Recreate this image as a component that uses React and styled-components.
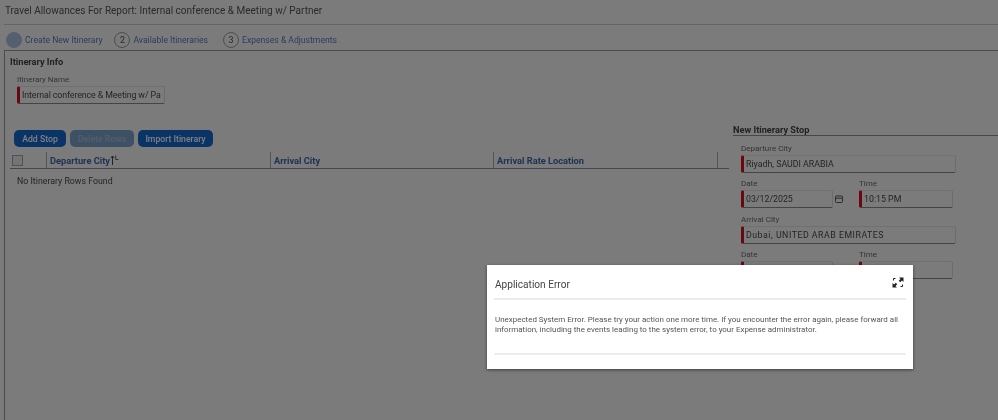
import React from 'react';
import styled, { createGlobalStyle } from 'styled-components';

const GlobalStyle = createGlobalStyle`
    html, body {
        margin: 0;
        padding: 0;
        background: #f6f6f6;
    }
    body {
        width: 998px;
        height: 420px;
        overflow: hidden;
        font-family: Roboto, "Liberation Sans", Arial, sans-serif;
        color: #333;
    }
`;

const Page = styled('div')`
    width: 998px;
    height: 420px;
    overflow: hidden;
    background: #f6f6f6;
    filter: blur(0.3px);
`;

const PageTitle = styled('div')`
    height: 25px;
    margin-left: 4px;
    padding: 3px 0 0 1px;
    box-sizing: border-box;
    line-height: 15px;
    font-size: 10px;
    color: #555;
    border-bottom: 1px solid #c8c8c8;
`;

const Steps = styled('div')`
    display: flex;
    align-items: center;
    height: 25px;
    padding: 4px 0 0 6px;
    box-sizing: border-box;
    font-size: 8.6px;
    color: #5a78b8;
`;

const Step = styled('div')`
    display: flex;
    align-items: center;
    gap: 3px;
    margin-right: ${props => props.gap}px;
`;

const StepCircle = styled('span')`
    display: flex;
    justify-content: center;
    align-items: center;
    width: 14px;
    height: 14px;
    border-radius: 50%;
    font-size: 9px;
    color: #555;
    border: 1px solid ${props => props.$active ? '#a8c0dc' : '#9a9a9a'};
    background: ${props => props.$active ? '#a8c0dc' : 'transparent'};
`;

const Panel = styled('div')`
    margin-left: 4px;
    height: 370px;
    border-top: 1px solid #969696;
    border-left: 1px solid #969696;
    box-sizing: border-box;
`;

const SectionTitle = styled('div')`
    font-size: 9.2px;
    font-weight: 700;
    line-height: 12px;
    color: #444;
    padding: 5px 0 0 5px;
`;

const FieldLabel = styled('div')`
    font-size: 8px;
    line-height: 10px;
    margin-bottom: 1px;
    color: #6a6a6a;
`;

const InputBox = styled('div')`
    display: flex;
    align-items: center;
    width: ${props => props.width}px;
    height: 18px;
    box-sizing: border-box;
    padding-left: 2px;
    font-size: 8.8px;
    letter-spacing: ${props => props.$spread || 0}px;
    white-space: nowrap;
    overflow: hidden;
    color: #4a4a4a;
    background: #f6f6f6;
    border-left: 3px solid #d01020;
    border-bottom: 1px solid #888;
    border-right: 1px solid #d8d8d8;
    border-top: 1px solid #e0e0e0;
    border-radius: 2px;
`;

const NameField = styled('div')`
    padding: 7px 0 0 12px;
`;

const Columns = styled('div')`
    display: flex;
    margin-top: 20px;
`;

const LeftColumn = styled('div')`
    width: 723px;
    padding-left: 9px;
    padding-top: 6px;
    box-sizing: border-box;
`;

const Toolbar = styled('div')`
    display: flex;
    gap: 4px;
`;

const Button = styled('div')`
    display: flex;
    justify-content: center;
    align-items: center;
    width: ${props => props.width}px;
    height: 17px;
    border-radius: 5px;
    font-size: 8.7px;
    font-weight: 500;
    color: ${props => props.$disabled ? '#a9bdd6' : '#fff'};
    background: ${props => props.$disabled ? '#7da0c8' : '#1468cc'};
`;

const TableHead = styled('div')`
    display: flex;
    align-items: stretch;
    width: 719px;
    height: 17px;
    margin: 5px 0 0 -4px;
    box-sizing: border-box;
    border-bottom: 1px solid #8e88a8;
`;

const HeadCell = styled('div')`
    display: flex;
    align-items: center;
    width: ${props => props.width}px;
    padding-left: 3px;
    box-sizing: border-box;
    font-size: 9.25px;
    font-weight: 700;
    color: #3f66a8;
    border-left: 1px solid #a8a8a8;
`;

const CheckCell = styled('div')`
    display: flex;
    align-items: center;
    width: 36px;
    padding-left: 2px;
    box-sizing: border-box;
`;

const CheckBox = styled('span')`
    width: 9px;
    height: 9px;
    border: 1px solid #a2a2a2;
    background: #e8e8e8;
`;

const SortIcon = () => (
    <svg width="9" height="10" viewBox="0 0 9 10" fill="none" stroke="#444" strokeWidth="1">
        <path d="M2.5 10V1M0.7 3L2.5 1L4.3 3" />
        <path d="M5.7 0.5V4.5H8.5" strokeWidth="0.8" />
    </svg>
);

const EmptyRow = styled('div')`
    padding: 6px 0 0 3px;
    font-size: 8.8px;
    line-height: 12px;
    color: #4a4a4a;
`;

const RightColumn = styled('div')`
    flex: 1;
    padding-left: 5px;
`;

const StopTitle = styled('div')`
    font-size: 9.2px;
    font-weight: 700;
    line-height: 10px;
    padding-top: 1px;
    color: #444;
    border-bottom: 1px solid #8e88a8;
`;

const StopForm = styled('div')`
    padding: 8px 0 0 8px;
`;

const StopRow = styled('div')`
    display: flex;
    margin-bottom: ${props => props.gap}px;
`;

const StopField = styled('div')`
    width: ${props => props.width}px;
`;

const DateRow = styled('div')`
    display: flex;
    align-items: center;
    gap: 2px;
`;

const CalendarIcon = () => (
    <svg width="8" height="8" viewBox="0 0 8 8" fill="none" stroke="#555" strokeWidth="1">
        <rect x="0.5" y="1" width="7" height="6.5" rx="1" />
        <path d="M0.5 3.2H7.5" />
    </svg>
);

const Overlay = styled('div')`
    position: fixed;
    inset: 0;
    background: rgba(0, 0, 0, 0.5);
`;

const Dialog = styled('div')`
    position: fixed;
    left: 487px;
    top: 265px;
    width: 426px;
    height: 104px;
    padding: 0 7px;
    box-sizing: border-box;
    background: #fff;
    box-shadow: 0 1px 3px rgba(0, 0, 0, 0.5);
`;

const DialogHeader = styled('div')`
    display: flex;
    justify-content: space-between;
    align-items: center;
    height: 35px;
    padding: 5px 2px 0 1px;
    box-sizing: border-box;
    border-bottom: 2px solid #ececec;
    font-size: 10.1px;
    color: #444;
`;

const DialogBody = styled('div')`
    height: 55px;
    padding: 15px 0 0 1px;
    box-sizing: border-box;
    font-size: 7.96px;
    line-height: 9.7px;
    color: #555;
    border-bottom: 2px solid #ececec;
`;

const ExpandIcon = () => (
    <svg width="12" height="11" viewBox="0 0 12 11" fill="none" stroke="#222" strokeWidth="1" style={{ marginTop: -4 }}>
        <path d="M1.5 3.5V1.5H3.5" />
        <path d="M7 0.5H11.5V5L10 3.5L8.2 5.2L6.8 3.8L8.5 2Z" fill="#222" strokeWidth="0" />
        <path d="M0.5 6V10.5H5L3.5 9L5.2 7.2L3.8 5.8L2 7.5Z" fill="#222" strokeWidth="0" />
        <path d="M10.5 7.5V9.5H8.5" />
    </svg>
);

const App = () => (
    <Page>
        <GlobalStyle />
        <PageTitle>Travel Allowances For Report: Internal conference &amp; Meeting w/ Partner</PageTitle>
        <Steps>
            <Step gap={12}><StepCircle $active /> Create New Itinerary</Step>
            <Step gap={15}><StepCircle>2</StepCircle> Available Itineraries</Step>
            <Step><StepCircle>3</StepCircle> Expenses &amp; Adjustments</Step>
        </Steps>
        <Panel>
            <SectionTitle>Itinerary Info</SectionTitle>
            <NameField>
                <FieldLabel>Itinerary Name</FieldLabel>
                <InputBox width={148} $spread={-0.1}>Internal conference &amp; Meeting w/ Pa</InputBox>
            </NameField>
            <Columns>
                <LeftColumn>
                    <Toolbar>
                        <Button width={52}>Add Stop</Button>
                        <Button width={64} $disabled>Delete Rows</Button>
                        <Button width={75}>Import Itinerary</Button>
                    </Toolbar>
                    <TableHead>
                        <CheckCell><CheckBox /></CheckCell>
                        <HeadCell width={224}>Departure City<SortIcon /></HeadCell>
                        <HeadCell width={223}>Arrival City</HeadCell>
                        <HeadCell width={224}>Arrival Rate Location</HeadCell>
                        <HeadCell width={1} />
                    </TableHead>
                    <EmptyRow>No Itinerary Rows Found</EmptyRow>
                </LeftColumn>
                <RightColumn>
                    <StopTitle>New Itinerary Stop</StopTitle>
                    <StopForm>
                        <StopRow gap={6}>
                            <StopField>
                                <FieldLabel>Departure City</FieldLabel>
                                <InputBox width={215}>Riyadh, SAUDI ARABIA</InputBox>
                            </StopField>
                        </StopRow>
                        <StopRow gap={7}>
                            <StopField width={118}>
                                <FieldLabel>Date</FieldLabel>
                                <DateRow>
                                    <InputBox width={92}>03/12/2025</InputBox>
                                    <CalendarIcon />
                                </DateRow>
                            </StopField>
                            <StopField>
                                <FieldLabel>Time</FieldLabel>
                                <InputBox width={94}>10:15 PM</InputBox>
                            </StopField>
                        </StopRow>
                        <StopRow gap={6}>
                            <StopField>
                                <FieldLabel>Arrival City</FieldLabel>
                                <InputBox width={215} $spread={0.5}>Dubai, UNITED ARAB EMIRATES</InputBox>
                            </StopField>
                        </StopRow>
                        <StopRow gap={6}>
                            <StopField width={118}>
                                <FieldLabel>Date</FieldLabel>
                                <InputBox width={92} />
                            </StopField>
                            <StopField>
                                <FieldLabel>Time</FieldLabel>
                                <InputBox width={94} />
                            </StopField>
                        </StopRow>
                    </StopForm>
                </RightColumn>
            </Columns>
        </Panel>
        <Overlay />
        <Dialog>
            <DialogHeader>
                Application Error
                <ExpandIcon />
            </DialogHeader>
            <DialogBody>
                Unexpected System Error. Please try your action one more time. If you encounter the error again, please forward all information, including the events leading to the system error, to your Expense administrator.
            </DialogBody>
        </Dialog>
    </Page>
);

export default App;
